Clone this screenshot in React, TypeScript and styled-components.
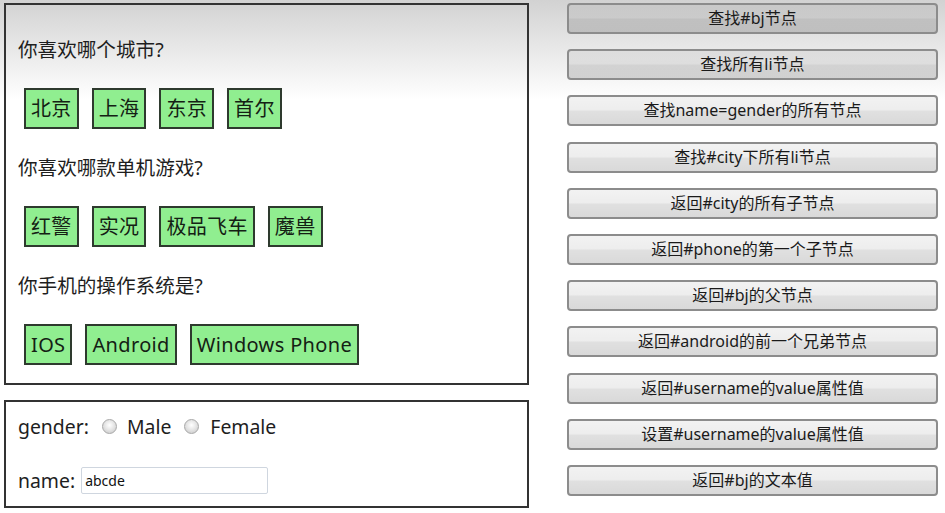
import React from "react";
import styled, { createGlobalStyle } from "styled-components";

const Global = createGlobalStyle`
  html, body { margin: 0; padding: 0; }
  body {
    background: #fff linear-gradient(#d2d2d2, #ffffff 100px) no-repeat;
    font-family: "Noto Sans", "Noto Sans CJK SC", sans-serif;
    color: #222;
    width: 945px;
    height: 513px;
    overflow: hidden;
  }
`;

const Page = styled.div`
  display: flex;
  align-items: flex-start;
  padding: 3px 0 0 4px;
`;

const LeftCol = styled.div`
  width: 525px;
  display: flex;
  flex-direction: column;
  gap: 15px;
`;

const Panel = styled.div<{ $pt: number; $pb: number; $white?: boolean }>`
  box-sizing: border-box;
  border: 2px solid #333;
  padding: ${(p) => p.$pt}px 12px ${(p) => p.$pb}px 12px;
  background: ${(p) => (p.$white ? "#fff" : "transparent")};
  display: flex;
  flex-direction: column;
`;

const Question = styled.div<{ $first?: boolean }>`
  font-size: 19.6px;
  line-height: 24px;
  height: 24px;
  margin-top: ${(p) => (p.$first ? 0 : 27)}px;
  color: #1e1e1e;
`;

const Options = styled.ul`
  list-style: none;
  margin: 26px 0 0 6px;
  padding: 0;
  display: flex;
  gap: 13px;
`;

const Option = styled.li`
  box-sizing: border-box;
  height: 41px;
  padding: 0 5px;
  border: 2px solid #2e3a2e;
  background: #90ee90;
  font-size: 20px;
  letter-spacing: 0.35px;
  line-height: 37px;
  color: #142014;
`;

const FormRow = styled.div<{ $mt?: number }>`
  display: flex;
  align-items: center;
  height: 28px;
  margin-top: ${(p) => p.$mt ?? 0}px;
  font-size: 19.4px;
  color: #1e1e1e;
`;

const Radio = styled.span<{ $ml: number; $mr: number }>`
  display: inline-block;
  box-sizing: border-box;
  width: 15px;
  height: 15px;
  border-radius: 50%;
  border: 1px solid #a8a8a8;
  background: radial-gradient(circle at 50% 40%, #ffffff 0%, #e6e6e6 45%, #c4c4c4 100%);
  margin: 0 ${(p) => p.$mr}px 0 ${(p) => p.$ml}px;
`;

const TextInput = styled.input`
  box-sizing: border-box;
  width: 187px;
  height: 27px;
  margin-left: 6px;
  border: 1px solid #cfd6df;
  border-radius: 2px;
  padding: 0 3px;
  font-family: "Noto Sans", sans-serif;
  font-size: 14px;
  color: #111;
  background: #fff;
  outline: none;
`;

const RightCol = styled.div`
  width: 371px;
  margin-left: 38px;
  display: flex;
  flex-direction: column;
  gap: 15.2px;
`;

const ActionButton = styled.button`
  box-sizing: border-box;
  height: 31px;
  width: 100%;
  border: 2px solid #8c8c8c;
  border-radius: 4px;
  background: linear-gradient(
    rgba(0, 0, 0, 0.05) 0%,
    rgba(0, 0, 0, 0.07) 48%,
    rgba(0, 0, 0, 0.12) 52%,
    rgba(0, 0, 0, 0.15) 100%
  );
  font-family: "Noto Sans", "Noto Sans CJK SC", sans-serif;
  font-size: 16px;
  line-height: 27px;
  padding: 0;
  color: #1a1a1a;
  text-align: center;
`;

const groups = [
  { q: "你喜欢哪个城市?", items: ["北京", "上海", "东京", "首尔"] },
  { q: "你喜欢哪款单机游戏?", items: ["红警", "实况", "极品飞车", "魔兽"] },
  { q: "你手机的操作系统是?", items: ["IOS", "Android", "Windows Phone"] },
];

const actions = [
  "查找#bj节点",
  "查找所有li节点",
  "查找name=gender的所有节点",
  "查找#city下所有li节点",
  "返回#city的所有子节点",
  "返回#phone的第一个子节点",
  "返回#bj的父节点",
  "返回#android的前一个兄弟节点",
  "返回#username的value属性值",
  "设置#username的value属性值",
  "返回#bj的文本值",
];

export default function App() {
  return (
    <>
      <Global />
      <Page>
        <LeftCol>
          <Panel $pt={33} $pb={18}>
            {groups.map((g, i) => (
              <React.Fragment key={g.q}>
                <Question $first={i === 0}>{g.q}</Question>
                <Options>
                  {g.items.map((it) => (
                    <Option key={it}>{it}</Option>
                  ))}
                </Options>
              </React.Fragment>
            ))}
          </Panel>
          <Panel $pt={10} $pb={12} $white>
            <FormRow>
              gender:
              <Radio $ml={13} $mr={10} />
              Male
              <Radio $ml={13} $mr={11} />
              Female
            </FormRow>
            <FormRow $mt={26}>
              name:
              <TextInput defaultValue="abcde" />
            </FormRow>
          </Panel>
        </LeftCol>
        <RightCol>
          {actions.map((a) => (
            <ActionButton key={a}>{a}</ActionButton>
          ))}
        </RightCol>
      </Page>
    </>
  );
}
